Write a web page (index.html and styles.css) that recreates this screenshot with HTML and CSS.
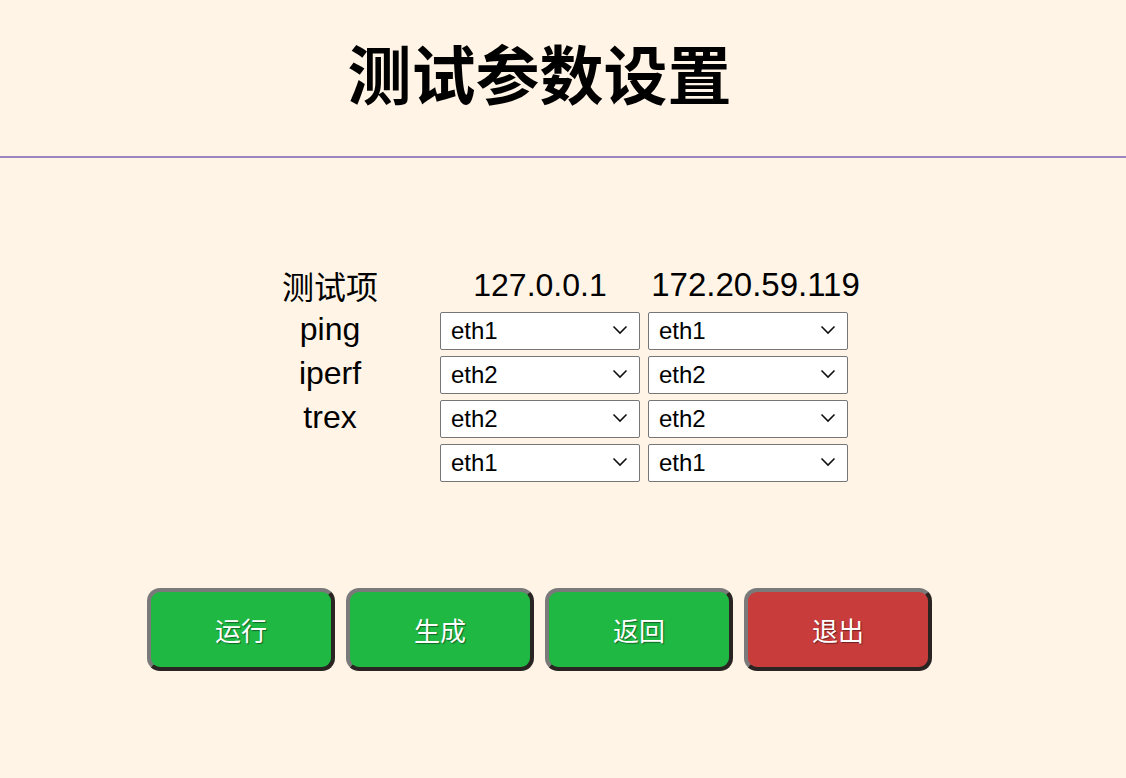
FILE: index.html
```html
<!DOCTYPE html>
<html lang="zh-CN">
<head>
<meta charset="utf-8">
<title>测试参数设置</title>
<link rel="stylesheet" href="styles.css">
</head>
<body>
<div class="page">
  <header class="head">
    <h1 class="title">测试参数设置</h1>
  </header>
  <div class="rule"></div>
  <section class="params">
    <div class="grid">
      <div class="cell label">测试项</div>
      <div class="cell head-ip c1">127.0.0.1</div>
      <div class="cell head-ip c2">172.20.59.119</div>

      <div class="cell label">ping</div>
      <div class="cell c1"><div class="sel"><select><option>eth1</option><option>eth2</option></select><svg class="chev" viewBox="0 0 16 10"><path d="M1.5 1.5 L8 8 L14.5 1.5" fill="none" stroke="#111" stroke-width="1.6"/></svg></div></div>
      <div class="cell c2"><div class="sel"><select><option>eth1</option><option>eth2</option></select><svg class="chev" viewBox="0 0 16 10"><path d="M1.5 1.5 L8 8 L14.5 1.5" fill="none" stroke="#111" stroke-width="1.6"/></svg></div></div>

      <div class="cell label">iperf</div>
      <div class="cell c1"><div class="sel"><select><option>eth1</option><option selected>eth2</option></select><svg class="chev" viewBox="0 0 16 10"><path d="M1.5 1.5 L8 8 L14.5 1.5" fill="none" stroke="#111" stroke-width="1.6"/></svg></div></div>
      <div class="cell c2"><div class="sel"><select><option>eth1</option><option selected>eth2</option></select><svg class="chev" viewBox="0 0 16 10"><path d="M1.5 1.5 L8 8 L14.5 1.5" fill="none" stroke="#111" stroke-width="1.6"/></svg></div></div>

      <div class="cell label">trex</div>
      <div class="cell c1"><div class="sel"><select><option>eth1</option><option selected>eth2</option></select><svg class="chev" viewBox="0 0 16 10"><path d="M1.5 1.5 L8 8 L14.5 1.5" fill="none" stroke="#111" stroke-width="1.6"/></svg></div></div>
      <div class="cell c2"><div class="sel"><select><option>eth1</option><option selected>eth2</option></select><svg class="chev" viewBox="0 0 16 10"><path d="M1.5 1.5 L8 8 L14.5 1.5" fill="none" stroke="#111" stroke-width="1.6"/></svg></div></div>

      <div class="cell label"></div>
      <div class="cell c1"><div class="sel"><select><option>eth1</option><option>eth2</option></select><svg class="chev" viewBox="0 0 16 10"><path d="M1.5 1.5 L8 8 L14.5 1.5" fill="none" stroke="#111" stroke-width="1.6"/></svg></div></div>
      <div class="cell c2"><div class="sel"><select><option>eth1</option><option>eth2</option></select><svg class="chev" viewBox="0 0 16 10"><path d="M1.5 1.5 L8 8 L14.5 1.5" fill="none" stroke="#111" stroke-width="1.6"/></svg></div></div>
    </div>
  </section>
  <nav class="actions">
    <button class="btn go">运行</button>
    <button class="btn go">生成</button>
    <button class="btn go">返回</button>
    <button class="btn quit">退出</button>
  </nav>
</div>
</body>
</html>
```

FILE: styles.css
```css
html, body {
  margin: 0;
  padding: 0;
  background: #fff4e6;
}
body {
  font-family: "Liberation Sans", "Noto Sans CJK SC", sans-serif;
  color: #000;
  height: 778px;
  overflow: hidden;
}
.page {
  width: 1079px;
}
.head {
  padding-top: 39px;
  text-align: center;
}
.title {
  margin: 0;
  font-family: "Noto Sans CJK SC", sans-serif;
  font-weight: 700;
  font-size: 64px;
  line-height: 64px;
  height: 64px;
}
.rule {
  margin-top: 53px;
  width: 1126px;
  height: 2px;
  background: #9c86c1;
}
.params {
  margin-top: 105px;
  display: flex;
  justify-content: center;
  padding-left: 4px;
}
.grid {
  display: grid;
  grid-template-columns: 212px 204px 215px;
  grid-auto-rows: 44px;
  column-gap: 3px;
}
.cell {
  display: flex;
  align-items: center;
  font-size: 32px;
}
.label {
  justify-content: center;
  padding-left: 2px;
}
.head-ip {
  justify-content: center;
}
.c1 {
  justify-content: center;
}
.c2 {
  justify-content: flex-start;
  padding-left: 3px;
}
.head-ip.c2 {
  justify-content: center;
  padding-left: 6px;
  font-size: 33px;
}
.sel {
  position: relative;
  width: 200px;
  height: 38px;
}
.sel select {
  appearance: none;
  -webkit-appearance: none;
  width: 200px;
  height: 38px;
  box-sizing: border-box;
  border: 1px solid #767676;
  border-radius: 2px;
  background: #fff;
  font-family: "Liberation Sans", sans-serif;
  font-size: 24px;
  color: #000;
  padding: 0 0 0 10px;
  margin: 0;
}
.chev {
  position: absolute;
  right: 12px;
  top: 15px;
  width: 16px;
  height: 10px;
  pointer-events: none;
}
.actions {
  margin-top: 105px;
  display: flex;
  justify-content: center;
  gap: 11px;
}
.btn {
  width: 188px;
  height: 83px;
  box-sizing: border-box;
  border-width: 4px;
  border-style: solid;
  border-color: #7a7a7a #2a2522 #2a2522 #7a7a7a;
  border-radius: 13px;
  color: #fff;
  font-family: "Noto Sans CJK SC", sans-serif;
  font-size: 26px;
  text-shadow: 1px 1px 1px rgba(0, 0, 0, 0.45);
  padding: 0;
  cursor: pointer;
}
.go {
  background: #1eb843;
}
.quit {
  background: #c83c3c;
}
```
